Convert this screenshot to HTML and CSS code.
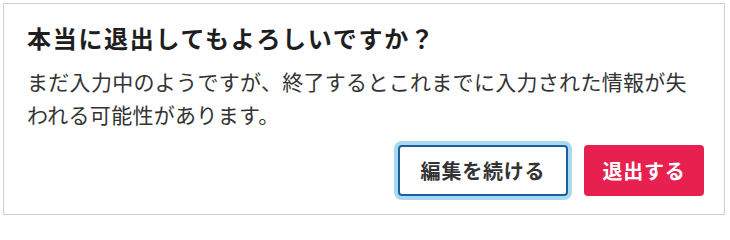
FILE: index.html
```html
<!DOCTYPE html>
<html lang="ja">
<head>
<meta charset="utf-8">
<title>確認</title>
<link rel="stylesheet" href="styles.css">
</head>
<body>
<div class="dialog" role="dialog" aria-labelledby="dlg-title">
  <h2 class="dialog-title" id="dlg-title">本当に退出してもよろしいですか？</h2>
  <p class="dialog-text">まだ入力中のようですが、終了するとこれまでに入力された情報が失われる可能性があります。</p>
  <div class="dialog-actions">
    <button class="btn btn-secondary" type="button">編集を続ける</button>
    <button class="btn btn-danger" type="button">退出する</button>
  </div>
</div>
</body>
</html>
```

FILE: styles.css
```css
* { box-sizing: border-box; }

html, body {
  margin: 0;
  padding: 0;
  background: #ffffff;
}

body {
  font-family: "Noto Sans CJK JP", "Noto Sans", sans-serif;
  color: #333333;
}

.dialog {
  margin: 3px;
  width: 722px;
  height: 212px;
  border: 1px solid #cfcfcf;
  background: #ffffff;
  padding: 18px 20px 0 23px;
}

.dialog-title {
  margin: 0;
  font-size: 24px;
  line-height: 32px;
  font-weight: 700;
  letter-spacing: 1.7px;
  color: #1e1e1e;
}

.dialog-text {
  margin: 11px 0 0 0;
  font-size: 21px;
  line-height: 33px;
  letter-spacing: 0.3px;
  color: #333333;
}

.dialog-actions {
  display: flex;
  justify-content: flex-end;
  gap: 16px;
  margin-top: 14px;
}

.btn {
  height: 51px;
  padding: 0;
  font-family: "Noto Sans CJK JP", "Noto Sans", sans-serif;
  font-size: 20px;
  font-weight: 700;
  letter-spacing: 0.8px;
  white-space: nowrap;
  border-radius: 4px;
  cursor: pointer;
  display: flex;
  align-items: center;
  justify-content: center;
}

.btn-secondary {
  background: #ffffff;
  color: #333333;
  border: 2px solid #1d5f9c;
  width: 170px;
  box-shadow: 0 0 0 4px #a8daef;
}

.btn-danger {
  background: #e8204f;
  color: #ffffff;
  border: none;
  width: 120px;
}
```
